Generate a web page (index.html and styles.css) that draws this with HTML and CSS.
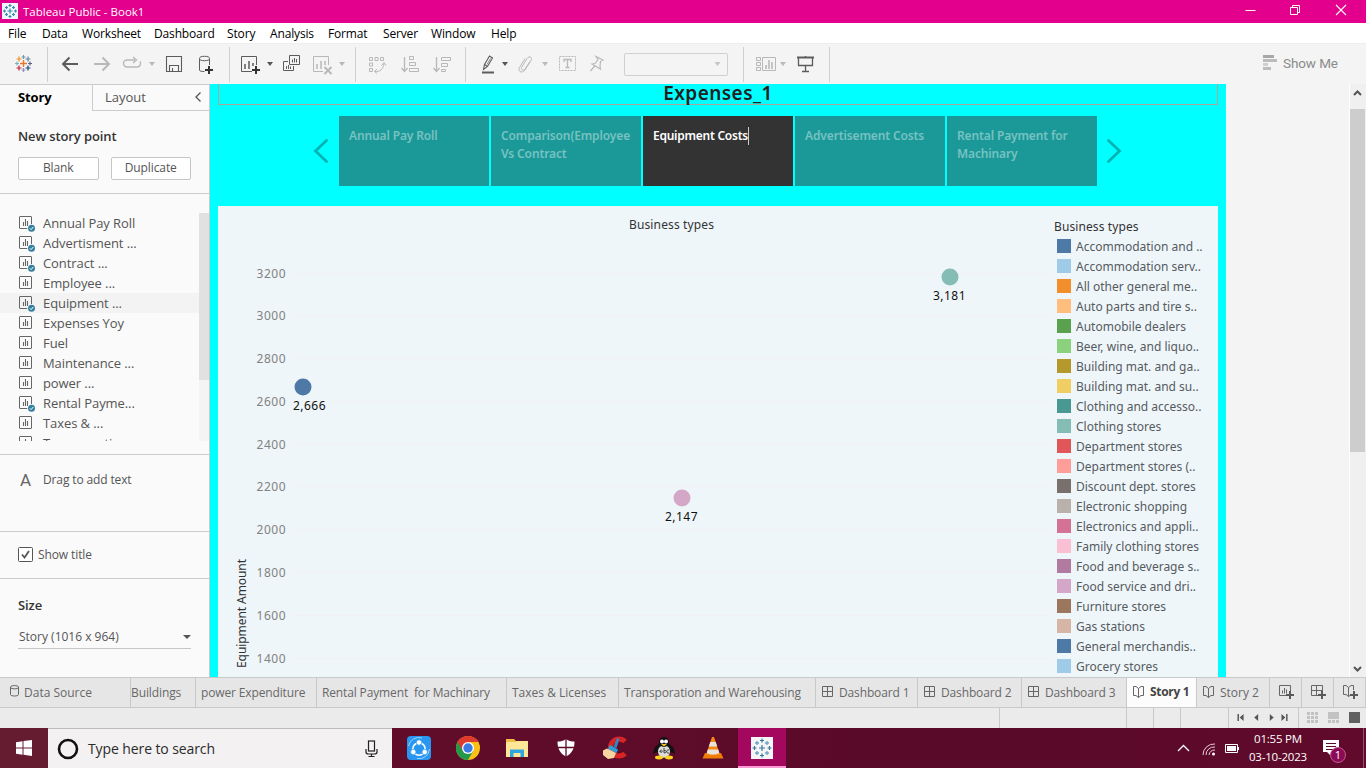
FILE: index.html
```html
<!DOCTYPE html>
<html lang="en">
<head>
<meta charset="utf-8">
<title>Tableau Public - Book1</title>
<link rel="stylesheet" href="styles.css">
</head>
<body>
<svg class="sprite" aria-hidden="true">
  <symbol id="caret" viewBox="0 0 6 4"><path d="M0 0H6L3 4Z" fill="currentColor"/></symbol>
  <symbol id="sheet" viewBox="0 0 16 16"><rect x=".5" y=".5" width="12" height="12" rx=".5" fill="none" stroke="#666"/><path d="M4.500 6v4M6.500 3v7M8.500 5v5" stroke="#666" stroke-width="1.100"/></symbol>
  <symbol id="check" viewBox="0 0 16 16"><circle cx="12.500" cy="12.300" r="4.200" fill="#fafafa"/><circle cx="12.500" cy="12.300" r="3.500" fill="#347f9f"/><path d="M10.800 12.300l1.300 1.300 2.200-2.600" stroke="#fff" fill="none"/></symbol>
  <symbol id="dash" viewBox="0 0 12 12"><path d="M.5.5h10v10H.5ZM5.500.5v10M.5 5.500h10" fill="none" stroke="#666"/></symbol>
  <symbol id="book" viewBox="0 0 12 13"><path d="M.5 1.500h2.500l2.500 2 2.500-2h2.500v9H8l-2.500 2-2.500-2H.5ZM5.500 3.500v9" fill="none" stroke="#666"/></symbol>
  <symbol id="plus" viewBox="0 0 8 8"><path d="M4 0v8M0 4h8" stroke="#5a5a5a" stroke-width="2"/></symbol>
</svg>

<header class="titlebar">
  <svg class="app-icon" width="16" height="16" viewBox="0 0 16 16"><path d="M0 0h16v16H0Z" fill="#eef7fb"/><path d="M8 5.500v5M5.500 8h5M8 1v3M6.500 2.500h3M8 12v3M6.500 13.500h3M2.500 6.500v3M1 8h3M13.500 6.500v3M12 8h3M4.500 3v3M3 4.500h3M11.500 3v3M10 4.500h3M4.500 10v3M3 11.500h3M11.500 10v3M10 11.500h3" stroke="#3f86ac" stroke-width="1.200"/></svg>
  <span class="app-title">Tableau Public - Book1</span>
  <svg class="window-buttons" width="110" height="20" viewBox="0 0 110 20"><path d="M.5 10.500h10" stroke="#fff"/><path d="M45.500 7.500h7v7h-7ZM47.500 7V5.500h7v7H53" fill="none" stroke="#fff"/><path d="M91 5l10 10M101 5L91 15" stroke="#fff" stroke-width="1.100"/></svg>
</header>

<nav class="menubar"><span>File</span><span>Data</span><span>Worksheet</span><span>Dashboard</span><span>Story</span><span>Analysis</span><span>Format</span><span>Server</span><span>Window</span><span>Help</span></nav>

<div class="toolbar">
  <svg class="tool" viewBox="0 0 24 24"><g fill="none" stroke-width="1.200"><path d="M11.500 8v7M8 11.500h7" stroke="#e8762d" stroke-width="1.400"/><path d="M11.500 3v4M9.500 5h4" stroke="#7099a6"/><path d="M11.500 16v4M9.500 18h4" stroke="#8b93bd"/><path d="M5 9.500v4M3 11.500h4" stroke="#76b2bd"/><path d="M18 9.500v4M16 11.500h4" stroke="#5b6591"/><path d="M7 4.500v5M4.500 7h5" stroke="#eb9129"/><path d="M16 4.500v5M13.500 7h5" stroke="#59879b"/><path d="M7 13.500v5M4.500 16h5" stroke="#c72035"/><path d="M16 13.500v5M13.500 16h5" stroke="#1f447e"/></g></svg>
  <i class="rule"></i>
  <svg class="tool dark" viewBox="0 0 24 24"><path d="M20 12H5M11.500 5.500L5 12l6.500 6.500" stroke-width="2"/></svg>
  <svg class="tool" viewBox="0 0 24 24"><path d="M4 12h15M12.500 5.500L19 12l-6.500 6.500" stroke-width="2"/></svg>
  <svg class="tool" viewBox="0 0 24 24"><path d="M15 8H7a3.500 3.500 0 0 0 0 7h10a3.500 3.500 0 0 0 3-5.500M13 5l3.500 3L13 11" stroke-width="1.400"/></svg>
  <svg class="caret"><use href="#caret"/></svg>
  <svg class="tool dark" viewBox="0 0 24 24"><path d="M4.500 4.500h15v15h-15ZM7.500 19v-5.500h9V19M10.500 16v3" stroke-width="1.100"/></svg>
  <svg class="tool dark" viewBox="0 0 24 24"><path d="M4.500 7v11c0 1 1.500 1.500 5 1.500M14.500 7v6"/><ellipse cx="9.500" cy="6.500" rx="5" ry="2.200"/><path d="M14 14v8M10 18h8" stroke="#333" stroke-width="2"/></svg>
  <i class="rule"></i>
  <svg class="tool dark" viewBox="0 0 24 24"><path d="M12 19.500H1.500v-15h15V13"/><path d="M5 12v5M9 9v8M13 11v3" stroke-width="1.500"/><path d="M16 14v8M12 18h8" stroke="#333" stroke-width="2"/></svg>
  <svg class="caret dark"><use href="#caret"/></svg>
  <svg class="tool dark" viewBox="0 0 24 24"><path d="M9.500 3.500h10v9h-10ZM8 9.500H3.500v9h10V14"/><path d="M12.500 7.500v3M14.500 6v4.500M16.500 7v3.500M6.500 14v3M8.500 13v4M10.500 14.500V17"/></svg>
  <svg class="tool" viewBox="0 0 24 24"><path d="M12 19.500H2.500v-15h15V13"/><path d="M6 12v5M10 9v8M14 9v4" stroke-width="1.500"/><path d="M13.500 15l7 7M20.500 15l-7 7" stroke-width="2"/></svg>
  <svg class="caret"><use href="#caret"/></svg>
  <i class="rule"></i>
  <svg class="tool" viewBox="0 0 24 24"><path d="M4.500 5.500h3v3h-3ZM10 5.500h3v3h-3ZM15.500 5.500h3v3h-3ZM4.500 11h3v3h-3ZM4.500 16.500h3v3h-3ZM10 19.500c5 .5 8-2 9-8M16.500 13.500l2.500-3 2 3M12 17l-2.500 2.500L12 21.500"/></svg>
  <svg class="tool" viewBox="0 0 24 24"><path d="M6.500 5v14M3.500 16l3 3.500 3-3.500" stroke-width="1.300"/><path d="M11.500 4.500h4v3h-4ZM11.500 10.500h6v3h-6ZM11.500 16.500h9v3h-9Z"/></svg>
  <svg class="tool" viewBox="0 0 24 24"><path d="M6.500 5v14M3.500 16l3 3.500 3-3.500" stroke-width="1.300"/><path d="M11.500 5.500h9v3h-9ZM11.500 11.500h6v3h-6ZM11.500 17.500h4v2h-4Z"/></svg>
  <i class="rule"></i>
  <svg class="tool dark" viewBox="0 0 24 24"><path d="M7.500 17.500l1-5 5-8.500 3 2-5 8.500ZM8.500 12.500l3 2" stroke-width="1.100"/><path d="M11 12.500l3.500-6" stroke-width=".7"/><path d="M6 20.500h12" stroke-width="2"/></svg>
  <svg class="caret dark"><use href="#caret"/></svg>
  <svg class="tool" viewBox="0 0 24 24"><path d="M17 9.500l-5 7.500c-1.500 2-4.500 1-3.500-1.500l5.500-9c2-3 6-1.500 4 2l-6 9.500c-3 4-7.500 1.500-5.500-2.500L12 6.500"/></svg>
  <svg class="caret"><use href="#caret"/></svg>
  <svg class="tool" viewBox="0 0 24 24"><path d="M4.500 4.500h16v14h-16Z" stroke-dasharray="2 1"/><path d="M9 10V7.500h7V10M12.500 8v8M10.500 15.500h4" stroke-width="1.300"/></svg>
  <svg class="tool" viewBox="0 0 24 24"><path d="M11 4.500l7 3.500-2.500 1.500-.5 4.500.5 3-8.500-5 3-.5 3-4ZM10 13.500l-4.500 5.500" stroke-width="1.200"/></svg>
  <div class="combo"><svg class="combo-caret"><use href="#caret"/></svg></div>
  <i class="rule"></i>
  <svg class="tool" viewBox="0 0 24 24"><path d="M2.500 5.500h4v3h-4ZM2.500 10.500h4v3h-4ZM2.500 15.500h4v3h-4ZM8.500 5.500h13v13h-13Z"/><path d="M12 13v4M15 8v9M18 10v7" stroke-width="1.600"/></svg>
  <svg class="caret"><use href="#caret"/></svg>
  <svg class="tool dark" viewBox="0 0 24 24"><path d="M4 5.500h17" stroke-width="2"/><path d="M5.500 6v7.500h14V6M12.500 4v2M12.500 14v5.500M9 19.500h7" stroke-width="1.300"/></svg>
  <i class="rule"></i>
  <div class="showme"><svg width="16" height="16" viewBox="0 0 16 16"><path d="M1 0h11v3H1Z" fill="#a8a8a8"/><path d="M1 4h14v3H1Z" fill="#bcbcbc"/><path d="M1 8h5v3H1Z" fill="#d0d0d0"/><path d="M1 12h8v3H1Z" fill="#bcbcbc"/></svg><span>Show Me</span></div>
</div>

<main class="workspace">
  <aside class="panel">
    <div class="panel-tabs"><b>Story</b><div class="layout-tab"><span>Layout</span><svg width="7" height="10" viewBox="0 0 7 10"><path d="M5.500 .5L1 5l4.500 4.500" fill="none" stroke="#555" stroke-width="1.300"/></svg></div></div>
    <section class="new-point">
      <h2>New story point</h2>
      <div class="buttons"><span>Blank</span><span>Duplicate</span></div>
    </section>
    <section class="sheets">
      <ul>
        <li><svg><use href="#sheet"/><use href="#check"/></svg>Annual Pay Roll</li>
        <li><svg><use href="#sheet"/><use href="#check"/></svg>Advertisment ...</li>
        <li><svg><use href="#sheet"/><use href="#check"/></svg>Contract ...</li>
        <li><svg><use href="#sheet"/></svg>Employee ...</li>
        <li class="hover"><svg><use href="#sheet"/><use href="#check"/></svg>Equipment ...</li>
        <li><svg><use href="#sheet"/></svg>Expenses Yoy</li>
        <li><svg><use href="#sheet"/></svg>Fuel</li>
        <li><svg><use href="#sheet"/></svg>Maintenance ...</li>
        <li><svg><use href="#sheet"/></svg>power ...</li>
        <li><svg><use href="#sheet"/><use href="#check"/></svg>Rental Payme...</li>
        <li><svg><use href="#sheet"/></svg>Taxes &amp; ...</li>
        <li><svg><use href="#sheet"/></svg>Transporation ...</li>
      </ul>
      <div class="list-track"><div class="list-thumb"></div></div>
    </section>
    <section class="drag"><span class="letter">A</span><span>Drag to add text</span></section>
    <section class="show-title"><svg width="15" height="15" viewBox="0 0 15 15"><rect x=".5" y=".5" width="14" height="14" rx="1" fill="#fff" stroke="#555"/><path d="M4 7.500l2.500 3L11 4" fill="none" stroke="#555" stroke-width="1.800"/></svg><span>Show title</span></section>
    <section class="size"><h2>Size</h2><div class="select"><span>Story (1016 x 964)</span><svg width="8" height="4" viewBox="0 0 8 4"><path d="M0 0h8L4 4Z" fill="#555"/></svg></div></section>
  </aside>

  <div class="story">
    <h1>Expenses_1</h1>
    <div class="navigator">
      <svg class="arrow" viewBox="0 0 16 24"><path d="M13.500 1.500L2.500 12l11 10.500"/></svg>
      <div class="points">
        <div>Annual Pay Roll</div>
        <div>Comparison(Employee Vs Contract</div>
        <div class="active">Equipment Costs<i class="cursor"></i></div>
        <div>Advertisement Costs</div>
        <div>Rental Payment for Machinary</div>
      </div>
      <svg class="arrow" viewBox="0 0 16 24"><path d="M2.500 1.500L13.500 12l-11 10.500"/></svg>
    </div>
    <div class="view">
      <svg class="chart" viewBox="218 206 832 471">
        <path class="grid" d="M293 273.500h756M293 315.500h756M293 358.500h756M293 401.500h756M293 444.500h756M293 486.500h756M293 529.500h756M293 572.500h756M293 615.500h756M293 658.500h756"/>
        <g class="ticks"><text x="256.500" y="278" textLength="29">3200</text><text x="256.500" y="320" textLength="29">3000</text><text x="256.500" y="363" textLength="29">2800</text><text x="256.500" y="406" textLength="29">2600</text><text x="256.500" y="449" textLength="29">2400</text><text x="256.500" y="491" textLength="29">2200</text><text x="256.500" y="534" textLength="29">2000</text><text x="256.500" y="577" textLength="29">1800</text><text x="256.500" y="620" textLength="29">1600</text><text x="256.500" y="663" textLength="29">1400</text></g>
        <text class="heading" x="629" y="229" textLength="85">Business types</text>
        <text class="heading" transform="translate(246 668) rotate(-90)" textLength="109">Equipment Amount</text>
        <circle cx="303" cy="387" r="8.500" fill="#4e79a7"/><circle cx="682" cy="498" r="8.500" fill="#d4a6c8"/><circle cx="950" cy="277" r="8.500" fill="#86bcb6"/>
        <g class="marks"><text x="293" y="410" textLength="32.500">2,666</text><text x="665" y="521" textLength="32.500">2,147</text><text x="933" y="300" textLength="32.500">3,181</text></g>
      </svg>
      <div class="legend">
        <h3>Business types</h3>
        <ul>
          <li><i class="c1"></i>Accommodation and ..</li>
          <li><i class="c2"></i>Accommodation serv..</li>
          <li><i class="c3"></i>All other general me..</li>
          <li><i class="c4"></i>Auto parts and tire s..</li>
          <li><i class="c5"></i>Automobile dealers</li>
          <li><i class="c6"></i>Beer, wine, and liquo..</li>
          <li><i class="c7"></i>Building mat. and ga..</li>
          <li><i class="c8"></i>Building mat. and su..</li>
          <li><i class="c9"></i>Clothing and accesso..</li>
          <li><i class="c10"></i>Clothing stores</li>
          <li><i class="c11"></i>Department stores</li>
          <li><i class="c12"></i>Department stores (..</li>
          <li><i class="c13"></i>Discount dept. stores</li>
          <li><i class="c14"></i>Electronic shopping</li>
          <li><i class="c15"></i>Electronics and appli..</li>
          <li><i class="c16"></i>Family clothing stores</li>
          <li><i class="c17"></i>Food and beverage s..</li>
          <li><i class="c18"></i>Food service and dri..</li>
          <li><i class="c19"></i>Furniture stores</li>
          <li><i class="c20"></i>Gas stations</li>
          <li><i class="c1"></i>General merchandis..</li>
          <li><i class="c2"></i>Grocery stores</li>
        </ul>
      </div>
    </div>
  </div>
  <div class="scrollbar">
    <svg width="15" height="25" viewBox="0 0 15 25"><path d="M4 11l3.500-3.500L11 11" fill="none" stroke="#555" stroke-width="2"/></svg>
    <div class="thumb"></div>
    <svg width="15" height="17" viewBox="0 0 15 17"><path d="M4 7l3.500 3.500L11 7" fill="none" stroke="#555" stroke-width="2"/></svg>
  </div>
</main>

<div class="sheet-tabs">
  <div class="source"><svg width="9" height="12" viewBox="0 0 9 12"><path d="M.5 2v7.500c0 2 8 2 8 0V2" fill="none" stroke="#666"/><ellipse cx="4.500" cy="2.200" rx="4" ry="1.700" fill="none" stroke="#666"/></svg><span>Data Source</span></div>
  <div class="clipped"><span>Buildings</span></div>
  <div><span class="tight">power Expenditure</span></div>
  <div><span class="tight">Rental Payment&nbsp; for Machinary</span></div>
  <div><span>Taxes &amp; Licenses</span></div>
  <div><span class="tight">Transporation and Warehousing</span></div>
  <div class="iconed"><svg><use href="#dash"/></svg><span class="tight">Dashboard 1</span></div>
  <div class="iconed"><svg><use href="#dash"/></svg><span class="tight">Dashboard 2</span></div>
  <div class="iconed"><svg><use href="#dash"/></svg><span class="tight">Dashboard 3</span></div>
  <div class="iconed current"><svg class="tall"><use href="#book"/></svg><b>Story 1</b></div>
  <div class="iconed"><svg class="tall"><use href="#book"/></svg><span>Story 2</span></div>
  <div class="add"><svg viewBox="0 0 16 16"><path d="M7 10.500H.5V.5h11V8" fill="none" stroke="#666"/><path d="M3.500 5.500v3M5.500 3v5.500M7.500 4.500v4" stroke="#666"/><use href="#plus" x="7" y="6" width="8" height="8"/></svg></div>
  <div class="add"><svg viewBox="0 0 16 16"><path d="M7 10.500H.5V.5h11V7M5.500.5v10M.5 5.500h11" fill="none" stroke="#666"/><use href="#plus" x="7" y="6" width="8" height="8"/></svg></div>
  <div class="add"><svg viewBox="0 0 16 16"><path d="M10.500 5V.5H8l-2.500 2-2.500-2H.5v9H3l2.500 2 1.500-1M5.500 2.500v9" fill="none" stroke="#666"/><use href="#plus" x="7" y="6" width="8" height="8"/></svg></div>
</div>

<div class="statusbar">
  <i></i><i></i><i></i><i></i>
  <svg class="pager" viewBox="0 0 71 20"><path d="M9.500 6v7M59.500 6v7" stroke="#555" stroke-width="1.500"/><path d="M15 6v7l-4-3.500ZM30 6v7l-4-3.500ZM42 6v7l4-3.500ZM54 6v7l4-3.500Z" fill="#555"/></svg>
  <svg class="modes" viewBox="0 0 67 20"><g fill="#c2c2c2"><path d="M8 4h3v3H8ZM12 4h3v3h-3ZM16 4h3v3h-3ZM8 8h3v3H8ZM12 8h3v3h-3ZM16 8h3v3h-3ZM8 12h3v3H8ZM12 12h3v3h-3ZM16 12h3v3h-3ZM29 4h11v7H29ZM29 12h3v3h-3ZM33 12h3v3h-3ZM37 12h3v3h-3Z"/></g><path d="M50 4h11v11H50Z" fill="#606060"/></svg>
</div>

<footer class="taskbar">
  <div class="start"><svg width="16" height="16" viewBox="0 0 16 16"><path d="M0 2.200l6.500-.9v6.200H0ZM7.500 1.100L16 0v7.500H7.500ZM0 8.500h6.500v6.200L0 13.800ZM7.500 8.500H16V16l-8.500-1.200Z" fill="#fff"/></svg></div>
  <div class="search"><svg width="22" height="22" viewBox="0 0 22 22"><circle cx="11" cy="11" r="9" fill="none" stroke="#111" stroke-width="2.600"/></svg><span>Type here to search</span><svg width="13" height="18" viewBox="0 0 13 18"><rect x="3.500" y="1" width="6" height="10" fill="none" stroke="#222" stroke-width="1.200"/><path d="M1 9v3c0 1.500 1 2 2.500 2h6c1.500 0 2.500-.5 2.500-2V9M6.500 14v2.500M3.500 16.500h6" fill="none" stroke="#222" stroke-width="1.200"/></svg></div>
  <div class="app"><svg viewBox="0 0 24 24"><rect width="24" height="24" rx="4" fill="#2897f2"/><circle cx="12" cy="13" r="6.200" fill="none" stroke="#fff" stroke-width="1.600"/><path d="M1.500 10A10.500 10.500 0 0 1 15 2M22.500 13A10.500 10.500 0 0 1 10 22.500" fill="none" stroke="#9dd2ff"/><circle cx="12" cy="6.500" r="2.700" fill="#fff" stroke="#2897f2" stroke-width=".7"/><circle cx="6.300" cy="16" r="2.700" fill="#fff" stroke="#2897f2" stroke-width=".7"/><circle cx="17.700" cy="16" r="2.700" fill="#fff" stroke="#2897f2" stroke-width=".7"/></svg></div>
  <div class="app"><svg viewBox="0 0 24 24"><circle cx="12" cy="12" r="12" fill="#fbc116"/><path d="M12 12L1.600 6A12 12 0 0 0 12 24l5.200-9Z" fill="#24994c"/><path d="M1.600 6A12 12 0 0 1 22.400 6H12L6.800 15Z" fill="#df3a2f"/><circle cx="12" cy="12" r="6" fill="#fff"/><circle cx="12" cy="12" r="4.700" fill="#3b7be8"/></svg></div>
  <div class="app"><svg viewBox="0 0 24 24"><path d="M1 3h8l2 2h12v16H1Z" fill="#eebd46"/><path d="M2 6h9l1-1h11v16H1V7Z" fill="#ffe79a"/><path d="M5 21v-7.500h14V21h-3.500v-4h-7v4Z" fill="#30a6df"/></svg></div>
  <div class="app"><svg viewBox="0 0 24 24"><path d="M12 3c2.500 2 5 2.500 8.500 2.500 0 7-2.500 12-8.500 15C6 17.500 3.500 12.500 3.500 5.500 7 5.500 9.500 5 12 3Z" fill="#fff"/><path d="M12 2v19M3 11.500h19" stroke="#5d0c29" stroke-width="1.300"/></svg></div>
  <div class="app"><svg viewBox="0 0 24 24"><path d="M22 5.500a8.500 8.500 0 1 0 0 12" fill="none" stroke="#d72525" stroke-width="5"/><path d="M14 2l2.500 1-3 9-3-1Z" fill="#3386c4"/><path d="M7 9l8 4.500-1.500 3.500-8.500-4Z" fill="#2d9fd5"/><path d="M4 12.500l9 4.500-2 5-6 1L0 19l-1-4Z" fill="#f7d4a0"/></svg></div>
  <div class="app"><svg viewBox="0 0 24 24"><path d="M7 8Q2 10 1 18l6-3M17 8q5 2 6 10l-6-3" fill="#111"/><ellipse cx="12" cy="13.500" rx="7" ry="8.500" fill="#161616"/><ellipse cx="12" cy="15.500" rx="6" ry="6.300" fill="#ddd"/><ellipse cx="12" cy="6" rx="5" ry="5" fill="#111"/><circle cx="10" cy="5.500" r="2" fill="#fff"/><circle cx="14" cy="5.500" r="2" fill="#fff"/><path d="M9 8h6l-3 2.500Z" fill="#f4ca16"/><ellipse cx="7" cy="21.500" rx="4" ry="1.900" fill="#ffd21e"/><ellipse cx="17" cy="21.500" rx="4" ry="1.900" fill="#ffd21e"/><path d="M8 16c0-3 3-2 2 0-1 1-2 0-2-1M12 12v5c3 0 3-3 0-2.500M17 14c-3-1-3 4 0 3" fill="none" stroke="#333" stroke-width=".9"/></svg></div>
  <div class="app"><svg viewBox="0 0 24 24"><path d="M4 17h16l2.500 5.500h-21Z" fill="#ef7b09"/><path d="M11 1h2l6 18H5Z" fill="#f58912"/><path d="M9.300 6h5.400l1.500 4.500H7.800ZM6.700 13.500h10.600l1 3.500c-4 2-9 2-12.500 0Z" fill="#e7e4df"/></svg></div>
  <div class="app running"><svg viewBox="0 0 24 24"><path d="M1 1h22v22H1Z" fill="#f4f5f6"/><path d="M12 9v6M9 12h6M12 2.500v4M10 4.500h4M12 17.500v4M10 19.500h4M4.500 10v4M2.500 12h4M19.500 10v4M17.500 12h4" stroke="#3a7898" stroke-width="1.200"/><path d="M7 5v4M5 7h4M17 5v4M15 7h4M7 15v4M5 17h4M17 15v4M15 17h4" stroke="#70a3c3" stroke-width="1.300"/></svg></div>
  <div class="tray">
    <svg viewBox="0 0 62 18" class="tray-icons"><path d="M1 12l5.500-5.500L12 12" fill="none" stroke="#fff" stroke-width="1.300"/><g fill="none" stroke="#e7cdd7"><path d="M26 16A11 11 0 0 1 38 5M29 16a8 8 0 0 1 9-8M32 16a6 6 0 0 1 6-5"/></g><circle cx="36.500" cy="15" r="1.500" fill="#fff"/><path d="M48.500 5.500h12v8h-12Z" fill="none" stroke="#fff"/><path d="M50 7h9v5h-9ZM61 8h1v3h-1Z" fill="#fff"/></svg>
    <div class="clock"><span>01:55 PM</span><span>03-10-2023</span></div>
    <div class="notice"><svg width="18" height="18" viewBox="0 0 18 18"><path d="M1 1h16v12h-8v4l-4-4H1Z" fill="#fff"/><path d="M4 4.500h10M4 7.500h10M4 10.500h7" stroke="#5e0b2b" stroke-width="1.100"/></svg><span class="badge">1</span></div>
  </div>
</footer>
</body>
</html>
```

FILE: styles.css
```css
* { box-sizing: border-box; }
body { margin: 0; width: 1366px; height: 768px; overflow: hidden; background: #f4f4f4; color: #333; font-family: "Open Sans", sans-serif; display: flex; flex-direction: column; white-space: nowrap; }
ul, h1, h2, h3 { margin: 0; padding: 0; list-style: none; }
svg { display: block; flex: none; }
.sprite { display: none; }

.titlebar { height: 23px; flex: none; display: flex; background: #e3008c; color: #fff; }
.app-icon { margin: 3px 0 0 2px; }
.app-title { margin-left: 5px; font-size: 11.5px; line-height: 23px; }
.window-buttons { margin-left: auto; margin-right: 11px; }

.menubar { height: 20px; flex: none; padding-left: 8px; display: grid; grid-template-columns: 34px 40px 72px 73px 43px 58px 55px 48px 60px 40px; background: #fff; color: #000; font-size: 12px; line-height: 21px; letter-spacing: -.15px; }

.toolbar { height: 41px; flex: none; padding-left: 12px; border-top: 1px solid #eee; display: grid; align-items: center; justify-items: start; grid-template-columns: 35px 11px 32px 30px 29px 13px 33px 34px 11px 27px 13px 31px 28px 16px 10px 33px 32px 35px 11px 26px 11px 29px 13px 30px 39px 119px 11px 26px 13px 36px 433px 90px; background: #f4f4f4; }
.tool { width: 24px; height: 24px; fill: none; stroke: #b8b8b8; }
.tool.dark { stroke: #5c5c5c; }
.rule { width: 1px; height: 35px; background: #d0d0d0; }
.caret { width: 6px; height: 4px; color: #b8b8b8; }
.caret.dark { color: #555; }
.combo { width: 104px; height: 23px; border: 1px solid #d0d0d0; border-radius: 2px; display: flex; align-items: center; justify-content: flex-end; padding-right: 6px; }
.combo-caret { width: 7px; height: 4px; color: #c4c4c4; }
.showme { display: flex; gap: 5px; align-items: center; color: #8b8b8b; font: 13.500px/20px Roboto, sans-serif; margin-top: -2px; letter-spacing: -.1px; }

.workspace { height: 593px; flex: none; display: flex; overflow: hidden; }
.panel { width: 210px; flex: none; background: #fafafa; border-right: 1px solid #c9c9c9; font-family: "Open Sans", sans-serif; color: #555; }
.panel h2 { font-size: 13px; line-height: 18px; font-weight: 600; color: #333; letter-spacing: -.1px; }
.panel-tabs { height: 27px; display: flex; border-top: 1px solid #ccc; font-size: 13px; line-height: 25px; }
.panel-tabs b { width: 92px; padding-left: 18px; color: #000; letter-spacing: -.1px; }
.layout-tab { flex: 1; display: flex; justify-content: space-between; padding: 0 7px 0 12px; border: solid #ccc; border-width: 0 0 1px 1px; }
.layout-tab svg { margin-top: 7px; }
.new-point { height: 83px; padding: 16px 18px 0; border-bottom: 1px solid #ccc; }
.buttons { display: flex; gap: 12px; margin-top: 12px; }
.buttons span { width: 81px; height: 23px; border: 1px solid #c6c6c6; border-radius: 2px; background: #fff; text-align: center; font-size: 12px; line-height: 20px; letter-spacing: -.1px; }
.sheets { height: 261px; padding: 19px 0 14px; border-bottom: 1px solid #ccc; display: flex; }
.sheets ul { width: 199px; height: 228px; overflow: hidden; }
.sheets li { height: 20px; padding-left: 19px; display: flex; gap: 8px; font-size: 13px; line-height: 20px; letter-spacing: -.08px; }
.sheets li svg { width: 16px; height: 16px; margin-top: 3px; }
.sheets .hover { background: #f3f3f3; }
.list-track { width: 10px; height: 228px; background: #f4f4f4; }
.list-thumb { height: 167px; background: #e1e1e1; }
.drag { height: 77px; padding: 15px 0 0 20px; border-bottom: 1px solid #ccc; display: flex; font-size: 12px; line-height: 20px; letter-spacing: -.13px; }
.letter { width: 23px; font: 17px/21px Roboto, sans-serif; color: #666; }
.show-title { height: 47px; padding: 0 0 1px 18px; border-bottom: 1px solid #ccc; display: flex; gap: 5px; align-items: center; font-size: 12px; letter-spacing: -.1px; }
.size { padding: 17px 18px 0; }
.select { margin-top: 11px; height: 24px; border-bottom: 1px solid #c6c6c6; display: flex; align-items: center; justify-content: space-between; padding-left: 1px; font-size: 12px; }

.story { width: 1016px; flex: none; background: #0ff; display: flex; flex-direction: column; padding: 0 8px; font-family: "Noto Sans", sans-serif; }
.story h1 { height: 21px; flex: none; border: 1px solid #a9a698; border-top: 0; text-align: center; font-size: 19px; line-height: 18px; color: #202020; font-weight: 600; letter-spacing: .45px; }
.navigator { height: 101px; flex: none; display: flex; padding: 11px 0 0 95px; }
.arrow { width: 16px; height: 24px; margin-top: 23px; fill: none; stroke: #00b4b4; stroke-width: 2.800; stroke-linecap: round; }
.points { display: flex; gap: 2px; margin: 0 9px 0 10px; }
.points div { width: 150px; height: 70px; padding: 11px 10px 0; background: #1b9999; color: #77c2c1; white-space: normal; font-size: 12px; line-height: 18px; font-weight: 600; letter-spacing: -.13px; }
.points .active { display: flex; background: #333; color: #fff; white-space: nowrap; letter-spacing: -.25px; }
.cursor { width: 1px; height: 18px; background: #ccc; }
.view { height: 471px; flex: none; display: flex; background: #eff6fa; }
.chart { width: 832px; height: 471px; font-family: "Noto Sans", sans-serif; font-size: 12px; }
.grid { stroke: #f1f1f3; fill: none; }
.ticks { fill: #828282; }
.heading { fill: #333; }
.marks { fill: #111; }
.legend { padding: 12px 0 0 4px; font-size: 12px; color: #555b5f; }
.legend h3 { font-size: 12px; font-weight: 400; line-height: 18px; color: #333; letter-spacing: .1px; }
.legend li { height: 20px; padding-left: 3px; display: flex; gap: 5px; line-height: 21px; }
.legend i { width: 14px; height: 14px; margin-top: 3px; }
.c1 { background: #4e79a7; } .c2 { background: #a0cbe8; } .c3 { background: #f28e2b; } .c4 { background: #ffbe7d; } .c5 { background: #59a14f; }
.c6 { background: #8cd17d; } .c7 { background: #b6992d; } .c8 { background: #f1ce63; } .c9 { background: #499894; } .c10 { background: #86bcb6; }
.c11 { background: #e15759; } .c12 { background: #ff9d9a; } .c13 { background: #79706e; } .c14 { background: #bab0ac; } .c15 { background: #d37295; }
.c16 { background: #fabfd2; } .c17 { background: #b07aa1; } .c18 { background: #d4a6c8; } .c19 { background: #9d7660; } .c20 { background: #d7b5a6; }
.scrollbar { width: 17px; margin-left: auto; padding: 0 1px 0 0; border-left: 1px solid #fff; background: #f0f0f0; display: flex; flex-direction: column; }
.thumb { height: 343px; margin-bottom: auto; background: #cdcdcd; }

.sheet-tabs { height: 31px; flex: none; display: grid; grid-template-columns: 131px 65px 121px 190px 112px 197px 102px 104px 105px 70px 73px 32px 32px 32px; border: solid #c9c9c9; border-width: 1px 0; background: #e6e6e6; color: #686868; font-size: 12px; line-height: 29px; }
.sheet-tabs div { padding-left: 5px; border-right: 1px solid #c9c9c9; display: flex; overflow: hidden; }
.sheet-tabs .source { padding-left: 10px; gap: 5px; align-items: center; }
.source svg { margin-top: -3px; }
.sheet-tabs .clipped { padding-left: 0; letter-spacing: -.1px; }
.tight { letter-spacing: -.14px; }
.sheet-tabs .iconed { padding-left: 6px; gap: 5px; }
.iconed svg { width: 12px; height: 12px; margin-top: 8px; }
.iconed svg.tall { height: 13px; margin-top: 7px; }
.sheet-tabs .current { background: #fcfcfc; color: #444; }
.current b { line-height: 27px; letter-spacing: -.3px; }
.sheet-tabs .add { padding-left: 9px; align-items: center; }
.add svg { width: 16px; height: 16px; }

.statusbar { height: 20px; flex: none; display: grid; grid-template-columns: 1000px 127px 27px 27px 47px 71px 67px; background: #ebebeb; }
.statusbar i { border-right: 1px solid #c9c9c9; }
.pager { grid-column: 6; width: 71px; height: 20px; border-right: 1px solid #c9c9c9; }
.statusbar .pager { border-left: 1px solid #c9c9c9; }
.modes { width: 67px; height: 20px; }

.taskbar { height: 40px; flex: none; display: flex; background: linear-gradient(90deg, #651c31 0 48px, #610d2a 392px, #580a28 960px, #610a2b 1366px); color: #fff; }
.start { width: 48px; padding: 12px 16px; }
.search { width: 344px; height: 40px; padding: 0 14px 0 9px; border-top: 1px solid #bbb; background: #f3f1f2; color: #2b2b2b; display: flex; align-items: center; font-size: 14px; }
.search span { margin-left: 9px; margin-right: auto; letter-spacing: -.1px; }
.app { width: 49px; padding: 8px 12.500px; }
.app svg { width: 24px; height: 24px; }
.search + .app { width: 51px; padding-left: 15px; }
.app.running { width: 48px; margin-left: 1px; padding-left: 12px; background: #a3075e; border-bottom: 2px solid #ff9bd3; }
.tray { margin-left: auto; display: flex; width: 187px; border-right: 1px solid #8e5166; margin-right: 2px; }
.tray-icons { width: 62px; height: 18px; margin-top: 11px; }
.clock { margin-left: 8px; width: 62px; display: flex; flex-direction: column; text-align: center; font-size: 11.500px; line-height: 18px; padding-top: 2px; letter-spacing: -.2px; }
.notice { margin: 11px 0 0 13px; width: 28px; height: 28px; position: relative; }
.badge { position: absolute; left: 8px; top: 8px; width: 16px; height: 16px; border: 1px solid #c45b94; border-radius: 50%; background: #8b0a56; text-align: center; font-size: 11px; line-height: 14px; }
```
